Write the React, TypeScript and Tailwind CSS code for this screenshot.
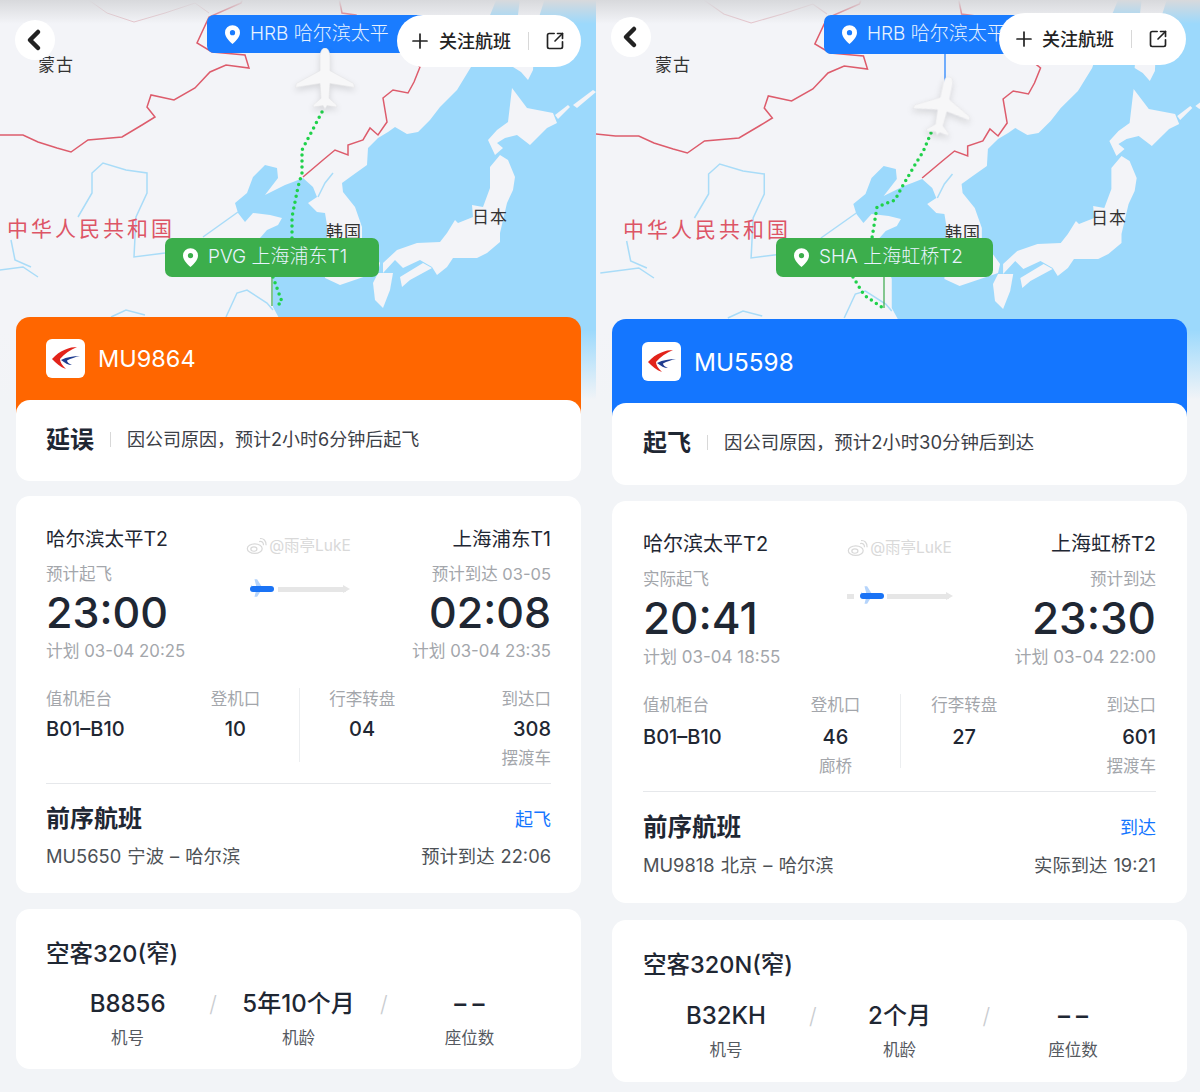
import React from 'react';
import { Plus, SquareArrowOutUpRight, ChevronLeft } from 'lucide-react';

const FONT = 'font-[Inter,"Noto_Sans_CJK_SC",sans-serif]';

// map geometry, in px of the left panel
const SEA =
  'M497,-2 L480,40 L471,67 L457,90 L440,107 L430,120 L418,132 L407,134 L395,127 L388,132 L378,138 L368,148 L367,165 L353,175 L342,183 L343,192 L355,207 L362,227 L362,238 L380,263 L378,272 L340,285 L325,278 L327,238 L327,225 L325,213 L317,212 L308,203 L317,197 L313,187 L303,178 L293,182 L285,185 L265,195 L278,178 L277,168 L265,165 L253,177 L247,193 L235,203 L238,213 L245,222 L253,213 L270,215 L282,218 L278,225 L267,230 L260,238 L273,278 L273,307 L280,320 L270,400 L640,400 L640,-2 Z';
const ISLANDS = [
  // sakhalin
  'M520,-2 L545,-2 L535,30 L533,70 L528,80 L521,72 L513,67 L515,40 Z',
  // hokkaido
  'M512,88 L527,108 L553,113 L557,123 L547,128 L530,145 L517,135 L505,138 L497,143 L503,148 L495,155 L488,140 L497,130 L508,122 Z',
  // honshu
  'M500,155 L508,160 L515,177 L513,190 L507,203 L500,233 L500,242 L487,253 L477,258 L453,258 L447,267 L437,275 L432,267 L420,260 L403,268 L395,260 L383,273 L383,263 L397,250 L417,243 L440,242 L447,233 L455,220 L458,223 L473,217 L472,205 L483,207 L490,188 L490,167 Z',
  // shikoku
  'M400,277 L423,263 L432,268 L410,280 L402,287 Z',
  // kyushu
  'M378,273 L393,273 L390,290 L383,308 L375,300 L373,283 Z',
  // kurils
  'M573,105 L593,90 L596,92 L577,108 Z',
  'M555,115 L568,105 L570,107 L558,119 Z',
];
const RED_BORDERS = [
  'M-20,133 L0,135 L23,135 L38,142 L57,148 L71,152 L88,140 L122,137 L142,125 L155,117 L147,107 L151,95 L174,100 L195,88 L210,72 L226,65 L249,68 L245,55 L212,52 L197,43 L209,17 L241,3 L243,-2',
  'M339,-2 L342,13 L356,15 L420,67 L414,82 L408,93 L393,90 L383,98 L387,122 L378,135 L370,128 L363,140 L348,145 L348,155 L335,150 L323,160 L303,177',
];
const PINK_BORDER = 'M86,-2 L107,13 L134,22 L165,13 L195,3 L209,13';
const RIVERS = [
  'M78,217 L92,193 L92,173 L103,163 L126,170 L147,173 L147,193 L136,217 L134,257 L165,253',
  'M-15,272 L23,267 L38,277',
  'M11,240 L15,260 L31,267',
  'M203,237 L238,212',
  'M226,317 L237,293 L247,290 L267,303 L273,310',
  'M111,317 L126,310 L145,315',
  'M333,173 L325,183 L318,197',
];

function Plane({ className }: { className: string }) {
  return (
    <svg viewBox="0 0 62 64" className={className}>
      <path d="M31 0 C34.5 0 36 5 36 9 L36 23 L60 36 L61 40 L36 36 L35 51 L43 58 L43 60 L33 58.5 L31 62 L29 58.5 L19 60 L19 58 L27 51 L26 36 L1 40 L2 36 L26 23 L26 9 C26 5 27.5 0 31 0 Z" fill="#f7f7f8" stroke="#e3e3e6" strokeWidth="0.6" />
    </svg>
  );
}

function MapView({ wide }: { wide?: boolean }) {
  const shift = wide ? 'translate(19.5 1) scale(1.012 1)' : undefined;
  return (
    <div className="absolute top-0 left-0 right-0 h-[400px] overflow-hidden bg-[#f3f4f8]">
      <svg viewBox="0 0 604 400" className="absolute top-0 left-0 h-[400px] w-[604px]">
        <g transform={shift}>
          <path d={SEA} fill="#9cd9fc" />
          {ISLANDS.map((d) => (
            <path key={d} d={d} fill="#f3f4f8" />
          ))}
          {RIVERS.map((d) => (
            <path key={d} d={d} fill="none" stroke="#a9dcf8" strokeWidth="1.5" />
          ))}
          <path d={PINK_BORDER} fill="none" stroke="#e5c3ca" strokeWidth="1" />
          {RED_BORDERS.map((d) => (
            <path key={d} d={d} fill="none" stroke="#dd5c6c" strokeWidth="1.5" />
          ))}
        </g>
        {wide ? (
          <>
            <path d="M335,133 L327,152 L320,163 L306,187 L299,200 L281,207 L276,238" fill="none" stroke="#1fd14a" strokeWidth="3.5" strokeLinecap="round" strokeDasharray="0 6" />
            <path d="M257,277 L268,295 L287,308" fill="none" stroke="#1fd14a" strokeWidth="3.5" strokeLinecap="round" strokeDasharray="0 6" />
            <path d="M288,277 L288,308" fill="none" stroke="#3aa84a" strokeWidth="1.2" />
            <path d="M349,53 L349,97" fill="none" stroke="#1a7cff" strokeWidth="1.2" />
          </>
        ) : (
          <>
            <path d="M322,112 L302,150 L302,173 L298,187 L292,217 L292,238" fill="none" stroke="#1fd14a" strokeWidth="3.5" strokeLinecap="round" strokeDasharray="0 6" />
            <path d="M273,277 L282,302 L276,306" fill="none" stroke="#1fd14a" strokeWidth="3.5" strokeLinecap="round" strokeDasharray="0 6" />
            <path d="M272,277 L272,306" fill="none" stroke="#3aa84a" strokeWidth="1.2" />
          </>
        )}
      </svg>
      <div className="absolute top-0 left-0 right-0 h-6 bg-gradient-to-b from-[#d8d9dc] to-transparent" />
      <div className="absolute top-[330px] left-0 right-0 h-[70px] bg-gradient-to-b from-transparent to-[#f2f4f7]" />
    </div>
  );
}

function MapLabels({ wide }: { wide?: boolean }) {
  const label = 'absolute text-[17px] leading-none text-[#333] tracking-[1px]';
  return (
    <>
      <span className={`${label} ${wide ? 'left-[59px] top-[57px]' : 'left-[38px] top-[57px]'}`}>蒙古</span>
      <span className={`${label} ${wide ? 'left-[495px] top-[210px]' : 'left-[472px] top-[209px]'}`}>日本</span>
      <span className={`${label} ${wide ? 'left-[349px] top-[225px]' : 'left-[326px] top-[224px]'}`}>韩国</span>
      <span className={`absolute text-[21px] leading-none text-[#dd5566] tracking-[3px] ${wide ? 'left-[27px] top-[219px]' : 'left-[7px] top-[218px]'}`}>
        中华人民共和国
      </span>
    </>
  );
}

function Tag({ text, className, color }: { text: string; className: string; color: string }) {
  return (
    <div className={`absolute flex items-center gap-[10px] rounded-[7px] pl-[18px] text-[19px] font-light text-[#e8f3ff] ${color} ${className}`}>
      <svg viewBox="0 0 16 20" className="h-[19px] w-[15px] shrink-0">
        <path fillRule="evenodd" d="M8 0a8 8 0 0 0-8 8c0 5 6 10.5 8 12 2-1.5 8-7 8-12a8 8 0 0 0-8-8Zm0 5.2a2.8 2.8 0 1 1 0 5.6 2.8 2.8 0 0 1 0-5.6Z" fill="white" />
      </svg>
      <span className="whitespace-pre">{text}</span>
    </div>
  );
}

function AirlineLogo() {
  return (
    <div className="flex h-[39px] w-[39px] items-center justify-center rounded-[6px] bg-white">
      <svg viewBox="0 0 39 39" className="h-[39px] w-[39px]">
        <path d="M31 8 C24 8 14 11 6 20 C10 24 14 28 20 30 C16 26 14 23 14 20 C18 15 24 11 31 8 Z" fill="#e2231a" />
        <path d="M34 17 C27 17 21 18 15 21 C19 24 22 26 26 26 C23 25 21 23 21 21.5 C25 19.5 29 18 34 17 Z" fill="#1f3c8f" />
      </svg>
    </div>
  );
}

function Route({ wide }: { wide?: boolean }) {
  return (
    <div className="flex flex-col items-center">
      <div className="flex items-center gap-[2px] text-[15.5px] leading-none text-[#d9d9d9]">
        <svg viewBox="0 0 24 20" className="h-[18px] w-[21px]" fill="none" stroke="#d9d9d9" strokeWidth="1.4">
          <ellipse cx="10" cy="13" rx="8.5" ry="5.5" />
          <ellipse cx="9" cy="13.5" rx="3.5" ry="2.5" />
          <path d="M15 5 C18 4 20 6 20 9 M16 1.5 C20 1 23 4 23 9" />
        </svg>
        <span>@雨亭LukE</span>
      </div>
      <div className={`relative h-[6px] ${wide ? 'mt-[36px] w-[106px]' : 'mt-[31px] ml-[4px] w-[100px]'}`}>
        <div className={`absolute top-[1px] right-[4px] h-[5px] bg-[#e6e6e6] ${wide ? 'left-[40px]' : 'left-[28px]'}`} />
        <div className="absolute -top-[1px] right-0 h-0 w-0 border-y-[4px] border-l-[7px] border-y-transparent border-l-[#e6e6e6]" />
        {wide && <div className="absolute top-[1px] left-0 h-[5px] w-[7px] bg-[#e6e6e6]" />}
        <svg viewBox="0 0 16 20" className={`absolute top-[-7px] h-[18px] w-[14px] ${wide ? 'left-[14px]' : 'left-[1px]'}`}>
          <path d="M4 0 L7 0 L12 8 L12 12 L7 20 L4 20 L6 12 L1 12 L0 14 L0 6 L1 8 L6 8 Z" fill="#b5d4fb" />
        </svg>
        <div className={`absolute top-0 h-[6px] w-[24px] rounded-full bg-[#1a73f5] ${wide ? 'left-[13px]' : 'left-0'}`} />
      </div>
    </div>
  );
}

type Flight = {
  no: string;
  header: string;
  status: string;
  note: string;
  from: string;
  to: string;
  depLabel: string;
  arrLabel: string;
  dep: string;
  arr: string;
  depPlan: string;
  arrPlan: string;
  gate: string;
  gateSub?: string;
  belt: string;
  exit: string;
  prevState: string;
  prevRoute: string;
  prevTime: string;
  plane: string;
  reg: string;
  age: string;
};

const FLIGHTS: Flight[] = [
  {
    no: 'MU9864',
    header: 'bg-[#ff6600]',
    status: '延误',
    note: '因公司原因，预计2小时6分钟后起飞',
    from: '哈尔滨太平T2',
    to: '上海浦东T1',
    depLabel: '预计起飞',
    arrLabel: '预计到达 03-05',
    dep: '23:00',
    arr: '02:08',
    depPlan: '计划 03-04 20:25',
    arrPlan: '计划 03-04 23:35',
    gate: '10',
    belt: '04',
    exit: '308',
    prevState: '起飞',
    prevRoute: 'MU5650 宁波 – 哈尔滨',
    prevTime: '预计到达 22:06',
    plane: '空客320(窄)',
    reg: 'B8856',
    age: '5年10个月',
  },
  {
    no: 'MU5598',
    header: 'bg-[#1476ff]',
    status: '起飞',
    note: '因公司原因，预计2小时30分钟后到达',
    from: '哈尔滨太平T2',
    to: '上海虹桥T2',
    depLabel: '实际起飞',
    arrLabel: '预计到达',
    dep: '20:41',
    arr: '23:30',
    depPlan: '计划 03-04 18:55',
    arrPlan: '计划 03-04 22:00',
    gate: '46',
    gateSub: '廊桥',
    belt: '27',
    exit: '601',
    prevState: '到达',
    prevRoute: 'MU9818 北京 – 哈尔滨',
    prevTime: '实际到达 19:21',
    plane: '空客320N(窄)',
    reg: 'B32KH',
    age: '2个月',
  },
];

function InfoCol({ label, value, sub, wide, className }: { label: string; value: string; sub?: string; wide?: boolean; className?: string }) {
  return (
    <div className={className}>
      <div className={`text-[16.5px] leading-[22px] text-[#a3a6ab] ${wide ? 'h-[28px]' : 'h-[26px]'}`}>{label}</div>
      <div className="h-[29px] text-[20px] font-medium leading-[30px] text-[#1f2733]">{value}</div>
      {sub && <div className="text-[16.5px] leading-[30px] text-[#a3a6ab]">{sub}</div>}
    </div>
  );
}

function TimeBlock({ name, label, time, plan, wide, right }: { name: string; label: string; time: string; plan: string; wide?: boolean; right?: boolean }) {
  return (
    <div className={right ? 'text-right' : ''}>
      <div className={`whitespace-nowrap leading-[30px] text-[#1f2733] ${wide ? 'text-[20px]' : 'text-[19.5px]'}`}>{name}</div>
      <div className={`mt-[9px] whitespace-nowrap text-[16.5px] leading-[22px] text-[#a3a6ab] ${wide ? '' : ''}`}>{label}</div>
      <div className={`font-medium leading-[54px] text-[#1f2733] ${wide ? 'mt-[1px] text-[44px]' : 'text-[43px]'}`}>{time}</div>
      <div className={`whitespace-nowrap leading-[24px] text-[#a3a6ab] ${wide ? 'text-[17px]' : 'text-[16.8px]'}`}>{plan}</div>
    </div>
  );
}

function Panel({ flight, wide }: { flight: Flight; wide?: boolean }) {
  return (
    <div className={`relative shrink-0 ${wide ? 'w-[604px] pl-[16px] pr-[13px] pt-[319px]' : 'w-[596px] pl-[16px] pr-[15px] pt-[317px]'}`}>
      <MapView wide={wide} />
      <MapLabels wide={wide} />
      <Tag
        text="HRB 哈尔滨太平"
        color="bg-[#1a7cff]"
        className={wide ? 'left-[228px] top-[15px] h-[39px] w-[230px]' : 'left-[207px] top-[15px] h-[38px] w-[234px]'}
      />
      <Tag
        text={wide ? 'SHA 上海虹桥T2' : 'PVG 上海浦东T1'}
        color="bg-[#3cae4c]"
        className={wide ? 'left-[180px] top-[238px] h-[39px] w-[217px]' : 'left-[165px] top-[238px] h-[39px] w-[214px]'}
      />
      <Plane
        className={
          wide
            ? 'absolute left-[316px] top-[76px] h-[62px] w-[62px] rotate-[12deg] drop-shadow-md'
            : 'absolute left-[294px] top-[48px] h-[63px] w-[62px] drop-shadow-md'
        }
      />
      <button className={`absolute flex h-[40px] w-[40px] items-center justify-center rounded-full bg-white ${wide ? 'left-[15px] top-[17px]' : 'left-[15px] top-[20px]'}`}>
        <ChevronLeft size={32} strokeWidth={3.4} className="text-[#222] -ml-[3px]" />
      </button>
      <div className={`absolute flex h-[52px] items-center rounded-[26px] bg-white text-[18px] text-[#222] ${wide ? 'left-[403px] top-[13px] w-[187px] pl-[13px]' : 'left-[397px] top-[15px] w-[184px] pl-[11px]'}`}>
        <Plus size={24} strokeWidth={1.7} />
        <span className={`font-medium ${wide ? 'ml-[6px]' : 'ml-[7px]'}`}>关注航班</span>
        <span className="ml-[17px] h-[18px] w-px bg-[#d8d8d8]" />
        <SquareArrowOutUpRight size={20} strokeWidth={2} className="ml-[16px]" />
      </div>

      <div className="relative">
        <div className={`flex items-start gap-[13px] rounded-t-[14px] pl-[30px] ${wide ? 'h-[98px] pt-[23px]' : 'h-[97px] pt-[22px]'} ${flight.header}`}>
          <AirlineLogo />
          <span className={`font-normal leading-[40px] text-white ${wide ? 'text-[24.3px]' : 'text-[23.5px]'}`}>{flight.no}</span>
        </div>
        <div className={`relative -mt-[14px] flex items-center rounded-[14px] bg-white ${wide ? 'h-[82px] pb-[3px] pl-[31px]' : 'h-[81px] pb-[2px] pl-[30px]'}`}>
          <span className="text-[24px] font-bold text-[#1f2733]">{flight.status}</span>
          <span className="mx-[16px] h-[15px] w-px bg-[#d8d8d8]" />
          <span className={wide ? 'text-[18.4px] text-[#3c4047]' : 'text-[18px] text-[#3c4047]'}>{flight.note}</span>
        </div>

        <div className={`rounded-[14px] bg-white ${wide ? 'mt-[16px] h-[402px] px-[31px] pt-[28px]' : 'mt-[15px] h-[397px] px-[30px] pt-[28px]'}`}>
          <div className="grid grid-cols-[1fr_auto_1fr] items-start">
            <TimeBlock name={flight.from} label={flight.depLabel} time={flight.dep} plan={flight.depPlan} wide={wide} />
            <div className={wide ? 'mt-[10px]' : 'mt-[13px]'}>
              <Route wide={wide} />
            </div>
            <TimeBlock name={flight.to} label={flight.arrLabel} time={flight.arr} plan={flight.arrPlan} wide={wide} right />
          </div>
          <div className="mt-[25px] grid h-[90px] grid-cols-4">
            <InfoCol label="值机柜台" value="B01–B10" wide={wide} />
            <InfoCol label="登机口" value={flight.gate} sub={flight.gateSub} wide={wide} className="text-center" />
            <InfoCol label="行李转盘" value={flight.belt} wide={wide} className="h-[74px] border-l border-[#eceef0] text-center" />
            <InfoCol label="到达口" value={flight.exit} sub="摆渡车" wide={wide} className="text-right" />
          </div>
          <div className={`h-px bg-[#e6e8eb] ${wide ? 'mt-[7px]' : 'mt-[5px]'}`} />
          <div className="mt-[19px] flex items-center justify-between">
            <span className={`font-bold leading-[32px] text-[#1f2733] ${wide ? 'text-[24.5px]' : 'text-[24px]'}`}>前序航班</span>
            <span className="text-[18px] text-[#1476ff]">{flight.prevState}</span>
          </div>
          <div className={`flex items-center justify-between text-[18.3px] leading-[28px] text-[#4d5156] [word-spacing:1px] ${wide ? 'mt-[8px]' : 'mt-[7px]'}`}>
            <span>{flight.prevRoute}</span>
            <span>{flight.prevTime}</span>
          </div>
        </div>

        <div className={`rounded-[14px] bg-white ${wide ? 'mt-[17px] h-[162px] px-[31px] pt-[28px]' : 'mt-[16px] h-[160px] px-[30px] pt-[28px]'}`}>
          <div className="text-[23.5px] font-medium leading-[34px] text-[#1f2733]">{flight.plane}</div>
          <div className={`grid grid-cols-[1fr_auto_1fr_auto_1fr] items-center ${wide ? 'mt-[18px]' : 'mt-[17px]'}`}>
            <div className="text-center text-[24px] font-medium leading-[32px] text-[#1f2733]">{flight.reg}</div>
            <span className="text-[22px] font-light leading-[24px] text-[#c9ccd0]">/</span>
            <div className="text-center text-[24px] font-medium leading-[32px] text-[#1f2733]">{flight.age}</div>
            <span className="text-[22px] font-light leading-[24px] text-[#c9ccd0]">/</span>
            <div className="text-center text-[24px] font-semibold leading-[32px] text-[#1f2733]">– –</div>
            <div className="mt-[6px] text-center text-[16.5px] text-[#55595f]">机号</div>
            <span />
            <div className="mt-[6px] text-center text-[16.5px] text-[#55595f]">机龄</div>
            <span />
            <div className="mt-[6px] text-center text-[16.5px] text-[#55595f]">座位数</div>
          </div>
        </div>
      </div>
    </div>
  );
}

export default function App() {
  return (
    <div className={`flex h-[1092px] w-[1200px] overflow-hidden bg-[#f2f4f7] ${FONT}`}>
      <Panel flight={FLIGHTS[0]} />
      <Panel flight={FLIGHTS[1]} wide />
    </div>
  );
}
